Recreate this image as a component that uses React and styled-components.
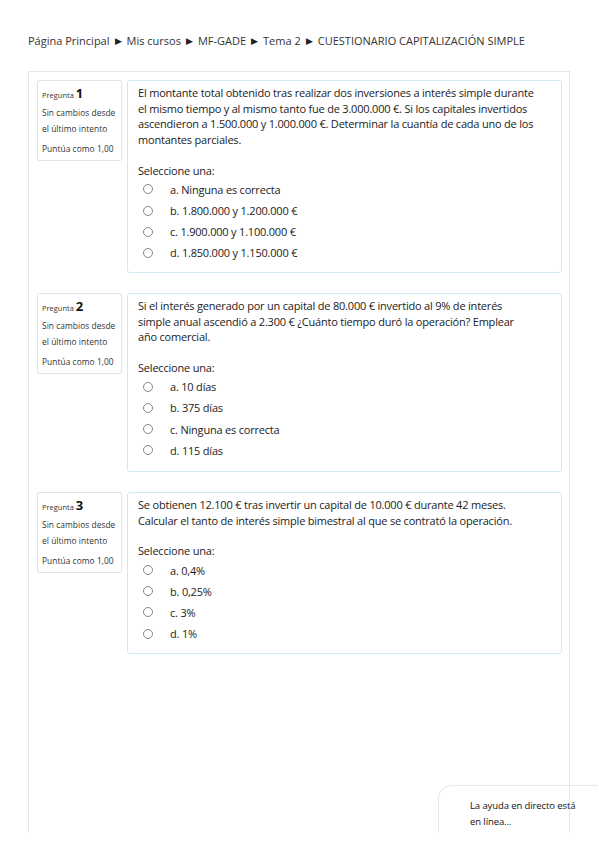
import React from "react";
import styled, { createGlobalStyle } from "styled-components";

const GlobalStyle = createGlobalStyle`
  html, body {
    margin: 0;
    padding: 0;
    background: #fff;
  }
  body {
    font-family: "Open Sans", "Noto Sans", sans-serif;
    color: #222;
  }
`;

const Page = styled.div`
  position: relative;
  width: 599px;
  height: 848px;
  overflow: hidden;
  padding: 33px 0 0 28px;
  box-sizing: border-box;
`;

const Breadcrumb = styled.nav`
  font-size: 11px;
  line-height: 16px;
  letter-spacing: 0;
  color: #333;
  display: flex;
  gap: 5px;
  white-space: nowrap;
`;

const Sep = styled.span`
  font-size: 8.5px;
  color: #222;
`;

const Region = styled.main`
  margin-top: 22px;
  width: 542px;
  height: 762px;
  box-sizing: border-box;
  border: 1px solid #e6e6e6;
  border-bottom: 0;
  padding: 8px 7px 0 8px;
  display: flex;
  flex-direction: column;
  gap: 20px;
`;

const Question = styled.section`
  display: flex;
  align-items: flex-start;
  gap: 5px;
`;

const Info = styled.div`
  width: 85px;
  height: 81px;
  box-sizing: border-box;
  border: 1px solid #e3e3e3;
  border-radius: 2px;
  padding: 4px 0 0 4px;
  font-size: 8.4px;
  letter-spacing: 0.05px;
  color: #333;
`;

const Number = styled.div`
  line-height: 16px;
  font-size: 7.4px;
  span {
    font-size: 13px;
    font-weight: 700;
    color: #111;
    margin-left: 2px;
  }
`;

const State = styled.div`
  margin-top: 2px;
  line-height: 16px;
`;

const Grade = styled.div`
  margin-top: 6px;
  line-height: 12px;
`;

const Content = styled.div`
  flex: 1;
  height: ${p => p.h}px;
  box-sizing: border-box;
  border: 1px solid #cfe9f2;
  border-radius: 3px;
  padding: 4px 25px 0 10px;
  font-size: 11px;
  letter-spacing: -0.2px;
  color: #222;
`;

const Text = styled.p`
  margin: 0;
  line-height: 15.7px;
`;

const Prompt = styled.div`
  margin-top: 15px;
  line-height: 16px;
`;

const Options = styled.div`
  display: flex;
  flex-direction: column;
`;

const Option = styled.label`
  display: flex;
  align-items: center;
  height: 21.2px;
  padding-left: 5px;
`;

const Radio = styled.span`
  width: 8px;
  height: 8px;
  border: 1px solid #888;
  border-radius: 50%;
  margin-right: 17px;
  flex-shrink: 0;
`;

const Chat = styled.div`
  position: absolute;
  left: 438px;
  top: 785px;
  width: 160px;
  height: 48px;
  box-sizing: border-box;
  border-top: 1px solid #e8e8e8;
  border-left: 1px solid #e8e8e8;
  border-top-left-radius: 14px;
  padding: 12px 0 0 31px;
  font-size: 9.5px;
  letter-spacing: -0.1px;
  line-height: 16px;
  color: #111;
`;

const questions = [
  {
    n: 1,
    h: 193,
    text:
      "El montante total obtenido tras realizar dos inversiones a interés simple durante el mismo tiempo y al mismo tanto fue de 3.000.000 €. Si los capitales invertidos ascendieron a 1.500.000 y 1.000.000 €. Determinar la cuantía de cada uno de los montantes parciales.",
    options: [
      "a. Ninguna es correcta",
      "b. 1.800.000 y 1.200.000 €",
      "c. 1.900.000 y 1.100.000 €",
      "d. 1.850.000 y 1.150.000 €"
    ]
  },
  {
    n: 2,
    h: 179,
    text:
      "Si el interés generado por un capital de 80.000 € invertido al 9% de interés simple anual ascendió a 2.300 € ¿Cuánto tiempo duró la operación? Emplear año\u00a0comercial.",
    options: ["a. 10 días", "b. 375 días", "c. Ninguna es correcta", "d. 115 días"]
  },
  {
    n: 3,
    h: 162,
    text:
      "Se obtienen 12.100 € tras invertir un capital de 10.000 € durante 42 meses. Calcular el tanto de interés simple bimestral al que se contrató la operación.",
    options: ["a. 0,4%", "b. 0,25%", "c. 3%", "d. 1%"]
  }
];

const crumbs = [
  "Página Principal",
  "Mis cursos",
  "MF-GADE",
  "Tema 2",
  "CUESTIONARIO CAPITALIZACIÓN SIMPLE"
];

const App = () => {
  return (
    <Page>
      <GlobalStyle />
      <Breadcrumb>
        {crumbs.map((c, i) => (
          <React.Fragment key={c}>
            {i > 0 && <Sep>▶</Sep>}
            <span>{c}</span>
          </React.Fragment>
        ))}
      </Breadcrumb>
      <Region>
        {questions.map(q => (
          <Question key={q.n}>
            <Info>
              <Number>
                Pregunta<span>{q.n}</span>
              </Number>
              <State>
                Sin cambios desde
                <br />
                el último intento
              </State>
              <Grade>Puntúa como 1,00</Grade>
            </Info>
            <Content h={q.h}>
              <Text>{q.text}</Text>
              <Prompt>Seleccione una:</Prompt>
              <Options>
                {q.options.map(o => (
                  <Option key={o}>
                    <Radio />
                    {o}
                  </Option>
                ))}
              </Options>
            </Content>
          </Question>
        ))}
      </Region>
      <Chat>
        La ayuda en directo está
        <br />
        en línea...
      </Chat>
    </Page>
  );
};

export default App;
